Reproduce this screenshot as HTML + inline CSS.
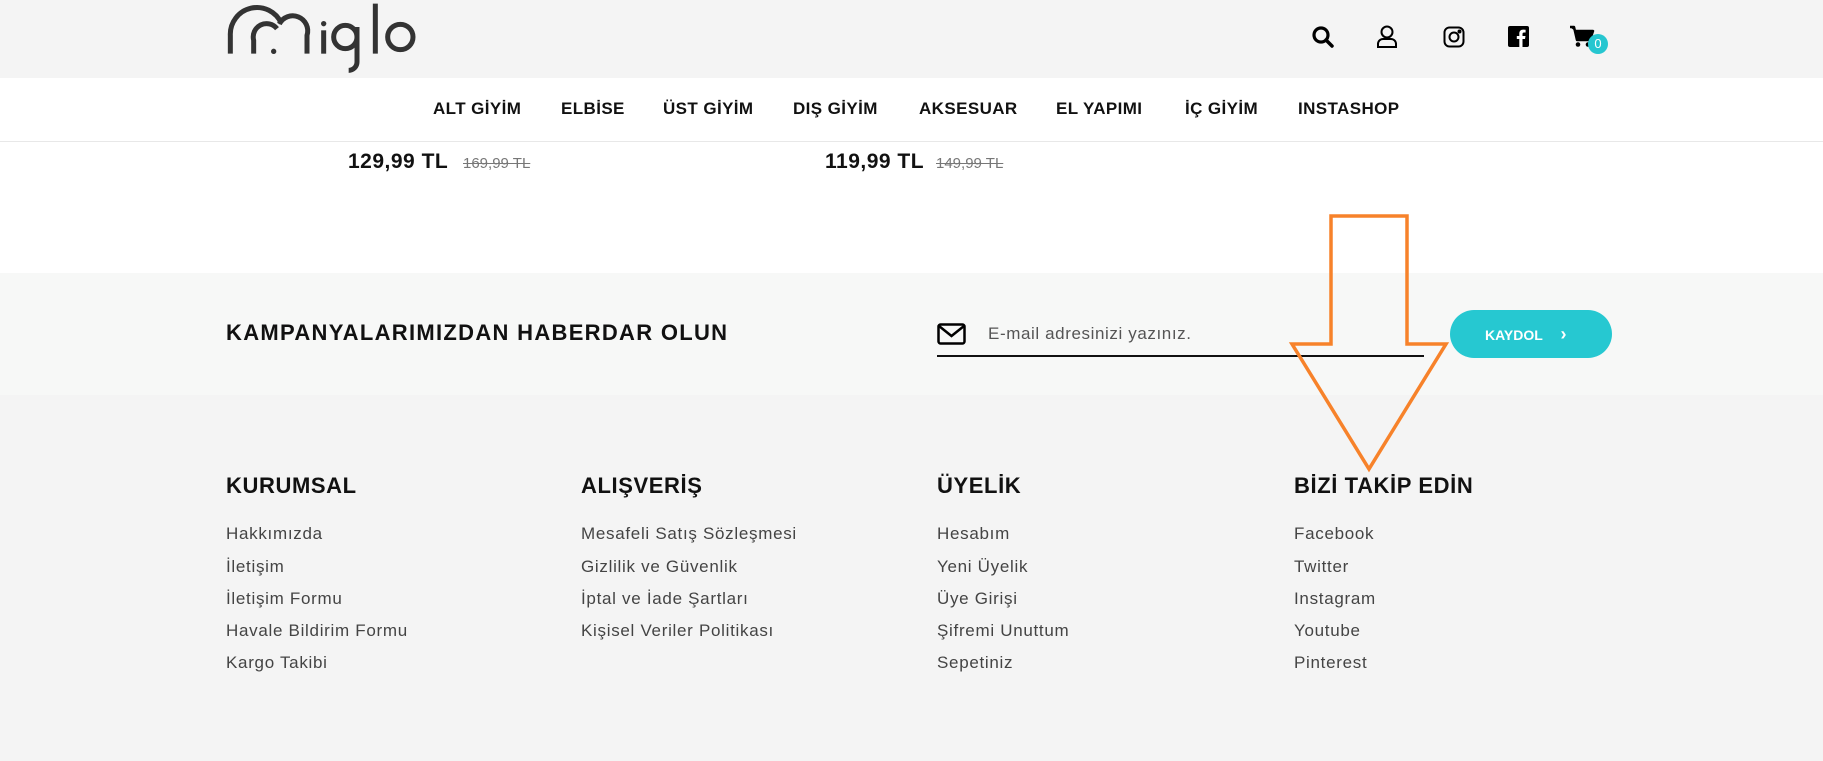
<!DOCTYPE html>
<html><head><meta charset="utf-8"><style>
*{margin:0;padding:0;box-sizing:border-box}
body{width:1823px;height:761px;overflow:hidden;background:#fff;font-family:"Liberation Sans",sans-serif;position:relative;color:#111}
.a{position:absolute;white-space:nowrap}
#top{position:absolute;left:0;top:0;width:1823px;height:78px;background:#f4f4f4}
#nav{position:absolute;left:0;top:78px;width:1823px;height:64px;background:#fff;border-bottom:1px solid #e8e8e8}
.nv{position:absolute;top:99px;font-size:17px;font-weight:bold;color:#111;letter-spacing:.4px}
.pr{position:absolute;top:150px;font-size:21px;font-weight:bold;color:#111;letter-spacing:.5px}
.old{position:absolute;top:155px;font-size:15px;color:#777;text-decoration:line-through}
#news{position:absolute;left:0;top:273px;width:1823px;height:122px;background:#f7f8f7}
#foot{position:absolute;left:0;top:395px;width:1823px;height:366px;background:#f4f4f4}
.h{position:absolute;top:473px;font-size:22px;font-weight:bold;color:#111;letter-spacing:.6px}
.l{position:absolute;font-size:17px;color:#444;letter-spacing:.7px}
</style></head><body>
<div id="top"></div>
<svg class="a" style="left:222px;top:2px" width="200" height="75" viewBox="0 0 600 225" fill="none" stroke="#333" stroke-width="15">
<path d="M25 155 V100 A80 80 0 0 1 178 64"/>
<path d="M172 66 A45 45 0 0 1 255 100 V155"/>
<path d="M95 155 V115 A40 40 0 0 1 165 80"/>
<circle cx="155" cy="148" r="8" fill="#333" stroke="none"/>
<path d="M305 85 V155"/><circle cx="305" cy="65" r="8" fill="#333" stroke="none"/>
<circle cx="370" cy="105" r="35"/><path d="M405 75 V180 A25 25 0 0 1 380 205"/>
<path d="M460 5 V155"/>
<circle cx="535" cy="105" r="38"/>
</svg>
<!-- icons -->
<svg class="a" style="left:1311px;top:25px" width="24" height="24" viewBox="0 0 24 24"><circle cx="10" cy="10" r="7" fill="none" stroke="#000" stroke-width="3.2"/><path d="M15 15 L21 21" stroke="#000" stroke-width="3.5" stroke-linecap="round"/></svg>
<svg class="a" style="left:1376px;top:25px" width="22" height="24" viewBox="0 0 22 24" fill="none" stroke="#000" stroke-width="2"><circle cx="11" cy="7" r="5.5"/><path d="M2 22 V19 A5 5 0 0 1 7 14 H15 A5 5 0 0 1 20 19 V22 Z"/></svg>
<svg class="a" style="left:1443px;top:26px" width="22" height="22" viewBox="0 0 22 22" fill="none" stroke="#000" stroke-width="2"><rect x="1.5" y="1.5" width="19" height="19" rx="5"/><circle cx="11" cy="11" r="4.5"/><circle cx="16.5" cy="5.5" r="1" fill="#000"/></svg>
<svg class="a" style="left:1508px;top:26px" width="21" height="21" viewBox="0 0 21 21"><rect width="21" height="21" rx="2" fill="#000"/><path d="M14.5 21 V13 H17 L17.5 10 H14.5 V8 C14.5 7 15 6.5 16 6.5 H17.6 V3.8 C16.8 3.7 16 3.6 15 3.6 C12.8 3.6 11.3 5 11.3 7.5 V10 H8.8 V13 H11.3 V21 Z" fill="#fff"/></svg>
<svg class="a" style="left:1569px;top:24px" width="26" height="24" viewBox="0 0 26 24"><path d="M1 3 H5 L8 16 H21 L24 7 H6" fill="#000" stroke="#000" stroke-width="2.5" stroke-linejoin="round"/><circle cx="9" cy="20.5" r="2.3"/><circle cx="19" cy="20.5" r="2.3"/></svg>
<div class="a" style="left:1588px;top:34px;width:20px;height:20px;border-radius:50%;background:#26c6d0;color:#fff;font-size:13px;text-align:center;line-height:20px">0</div>
<div id="nav"></div>
<div class="nv" style="left:433px">ALT GİYİM</div>
<div class="nv" style="left:561px">ELBİSE</div>
<div class="nv" style="left:663px">ÜST GİYİM</div>
<div class="nv" style="left:793px">DIŞ GİYİM</div>
<div class="nv" style="left:919px">AKSESUAR</div>
<div class="nv" style="left:1056px">EL YAPIMI</div>
<div class="nv" style="left:1185px">İÇ GİYİM</div>
<div class="nv" style="left:1298px">INSTASHOP</div>
<div class="pr" style="left:348px">129,99 TL</div><div class="old" style="left:463px">169,99 TL</div>
<div class="pr" style="left:825px">119,99 TL</div><div class="old" style="left:936px">149,99 TL</div>
<div id="news"></div>
<div class="a" style="left:226px;top:320px;font-size:22px;font-weight:bold;color:#111;letter-spacing:1.3px">KAMPANYALARIMIZDAN HABERDAR OLUN</div>
<svg class="a" style="left:937px;top:323px" width="29" height="22" viewBox="0 0 29 22" fill="none" stroke="#000" stroke-width="2.5"><rect x="1.5" y="1.5" width="26" height="19" rx="2"/><path d="M2 3 L14.5 13 L27 3"/></svg>
<div class="a" style="left:988px;top:324px;font-size:17px;color:#555;letter-spacing:.6px">E-mail adresinizi yazınız.</div>
<div class="a" style="left:937px;top:355px;width:487px;height:1.5px;background:#111"></div>
<div class="a" style="left:1450px;top:310px;width:162px;height:48px;border-radius:24px;background:#26c8d1;color:#fff;font-size:14px;font-weight:bold;line-height:48px;padding-left:35px">KAYDOL <span style="font-size:18px;margin-left:14px">›</span></div>
<div id="foot"></div>
<div class="h" style="left:226px">KURUMSAL</div>
<div class="h" style="left:581px">ALIŞVERİŞ</div>
<div class="h" style="left:937px">ÜYELİK</div>
<div class="h" style="left:1294px">BİZİ TAKİP EDİN</div>
<div class="l" style="left:226px;top:524px">Hakkımızda</div>
<div class="l" style="left:226px;top:557px">İletişim</div>
<div class="l" style="left:226px;top:589px">İletişim Formu</div>
<div class="l" style="left:226px;top:621px">Havale Bildirim Formu</div>
<div class="l" style="left:226px;top:653px">Kargo Takibi</div>
<div class="l" style="left:581px;top:524px">Mesafeli Satış Sözleşmesi</div>
<div class="l" style="left:581px;top:557px">Gizlilik ve Güvenlik</div>
<div class="l" style="left:581px;top:589px">İptal ve İade Şartları</div>
<div class="l" style="left:581px;top:621px">Kişisel Veriler Politikası</div>
<div class="l" style="left:937px;top:524px">Hesabım</div>
<div class="l" style="left:937px;top:557px">Yeni Üyelik</div>
<div class="l" style="left:937px;top:589px">Üye Girişi</div>
<div class="l" style="left:937px;top:621px">Şifremi Unuttum</div>
<div class="l" style="left:937px;top:653px">Sepetiniz</div>
<div class="l" style="left:1294px;top:524px">Facebook</div>
<div class="l" style="left:1294px;top:557px">Twitter</div>
<div class="l" style="left:1294px;top:589px">Instagram</div>
<div class="l" style="left:1294px;top:621px">Youtube</div>
<div class="l" style="left:1294px;top:653px">Pinterest</div>
<svg class="a" style="left:0;top:0" width="1823" height="761"><polygon points="1331,216 1407,216 1407,344 1446,344 1369,469 1292,344 1331,344" fill="none" stroke="#f7822a" stroke-width="3.5"/></svg>
</body></html>
